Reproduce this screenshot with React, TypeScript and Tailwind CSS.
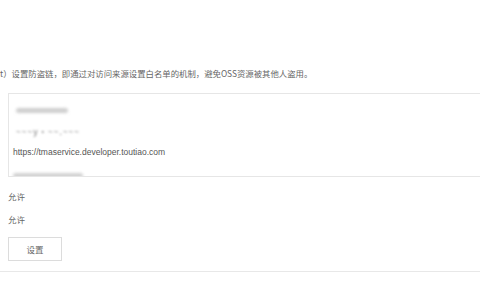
export default function App() {
  const font = { fontFamily: '"Noto Sans CJK SC", "Liberation Sans", sans-serif' };

  return (
    <div
      className="w-[480px] h-[300px] overflow-hidden bg-white text-[8.5px] text-[#666]"
      style={font}
    >
      {/* intro line */}
      <div className="pt-[67px] h-[79px] leading-[12px] whitespace-nowrap text-[8.4px]">
        t）设置防盗链，即通过对访问来源设置白名单的机制，避免OSS资源被其他人盗用。
      </div>

      {/* referer list */}
      <div className="mt-[14px] ml-[8px] w-[480px] h-[84px] overflow-hidden border border-[#e6e6e6] pl-[4px] pt-[4px]">
        <div className="h-[22px] leading-[22px] pl-[3px]">
          <span className="inline-block w-[52px] h-[5px] align-middle rounded-full bg-[#cfcfcf] blur-[1.5px]" />
        </div>
        <div className="h-[22px] leading-[22px] pl-[3px] blur-[1px] text-[#777] tracking-[1px]">~~~y·~~.~~~</div>
        <div className="h-[20px] leading-[20px] text-[#555]" style={{ fontFamily: '"Liberation Sans", sans-serif' }}>
          https://tmaservice.developer.toutiao.com
        </div>
        <div className="h-[22px] leading-[22px] pt-[1px]">
          <span className="inline-block w-[70px] h-[5px] align-middle rounded-full bg-[#d2d2d2] blur-[1.5px]" />
        </div>
      </div>

      <div className="ml-[8px] mt-[8px] h-[22px] leading-[22px]">允许</div>
      <div className="ml-[8px] mt-[1px] h-[22px] leading-[22px]">允许</div>

      <button className="ml-[8px] mt-[7px] w-[54px] h-[24px] border border-[#dcdcdc] bg-white text-[8.5px] text-[#666]">
        设置
      </button>

      <div className="mt-[10px] h-px w-full bg-[#e8e8e8]" />
    </div>
  );
}
